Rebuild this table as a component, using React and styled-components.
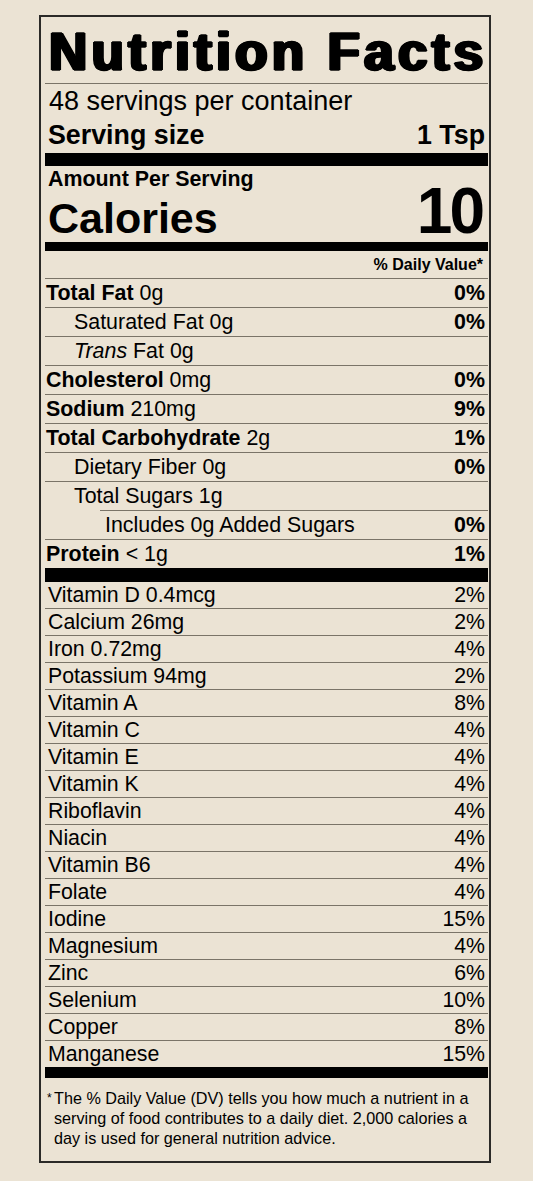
import React from "react";
import styled, { createGlobalStyle } from "styled-components";

const GlobalStyle = createGlobalStyle`
  html, body {
    margin: 0;
    padding: 0;
    background: #ebe3d4;
  }
  body {
    font-family: "Liberation Sans", Arial, Helvetica, sans-serif;
    color: #000;
  }
`;

const LINE = "#7a7468";

const Page = styled.div`
  padding: 15px 0 0 39px;
`;

const Label = styled.section`
  border: 2px solid #2b2a28;
  padding: 0 1px 0 4px;
  box-sizing: content-box;
  width: 443px;
`;

// heavy headline: stroke + sideways shadows fake a black weight
const Title = styled.h1`
  margin: 0;
  height: 66px;
  border-bottom: 1px solid ${LINE};
  font-size: 53px;
  font-weight: 700;
  letter-spacing: 4.3px;
  -webkit-text-stroke: 1.6px #000;
  text-shadow: 1px 0 0 #000, -1px 0 0 #000, 1.8px 0 0 #000, -1.8px 0 0 #000;
  line-height: 70px;
  padding-left: 4px;
  white-space: nowrap;
`;

const Servings = styled.div`
  height: 32px;
  line-height: 34px;
  font-size: 27px;
  padding-left: 4px;
`;

const ServingSize = styled.div`
  display: flex;
  justify-content: space-between;
  align-items: center;
  height: 37px;
  padding: 2px 3px 0 3px;
  box-sizing: border-box;
  font-size: 26.8px;
  font-weight: 700;
`;

const Bar = styled.div`
  height: ${({ $h }) => $h}px;
  background: #000;
`;

const CaloriesBlock = styled.div`
  height: 76px;
  padding: 0 3px 0 3px;
  box-sizing: border-box;
`;

const AmountLabel = styled.div`
  font-size: 21.4px;
  font-weight: 700;
  line-height: 26px;
`;

const CaloriesRow = styled.div`
  display: flex;
  justify-content: space-between;
  align-items: baseline;
  height: 50px;
  margin-top: -6px;
  font-weight: 700;
`;

const CaloriesText = styled.span`
  font-size: 43px;
  line-height: 50px;
`;

const CaloriesValue = styled.span`
  font-size: 64px;
  line-height: 50px;
  letter-spacing: -3px;
  margin-right: 3px;
`;

const DvHeader = styled.div`
  height: 27px;
  line-height: 27px;
  text-align: right;
  font-size: 16px;
  font-weight: 700;
  padding-right: 5px;
  border-bottom: 1px solid ${LINE};
`;

const NutrientRow = styled.div`
  display: flex;
  justify-content: space-between;
  align-items: center;
  height: 28px;
  font-size: 21.4px;
  padding: 0 3px 0 ${({ $pad }) => $pad}px;
  border-top: ${({ $first }) => ($first ? "none" : `1px solid ${LINE}`)};
  margin-left: ${({ $inset }) => $inset}px;
`;

const Bold = styled.b`
  font-weight: 700;
`;

const Italic = styled.i`
  font-style: italic;
`;

const Percent = styled.span`
  font-weight: 700;
`;

const VitaminRow = styled.div`
  display: flex;
  justify-content: space-between;
  align-items: center;
  height: 26px;
  font-size: 21.3px;
  padding: 0 3px 0 3px;
  border-bottom: ${({ $last }) => ($last ? "none" : `1px solid ${LINE}`)};
`;

const Footnote = styled.div`
  display: flex;
  padding: 10px 10px 13px 2px;
  font-size: 16.2px;
  line-height: 20px;
`;

const Star = styled.span`
  font-size: 12px;
  width: 7px;
  flex: none;
  line-height: 20px;
`;

const nutrients = [
  { name: <><Bold>Total Fat</Bold> 0g</>, dv: "0%", pad: 1, first: true },
  { name: <>Saturated Fat 0g</>, dv: "0%", pad: 29 },
  { name: <><Italic>Trans</Italic> Fat 0g</>, dv: "", pad: 29 },
  { name: <><Bold>Cholesterol</Bold> 0mg</>, dv: "0%", pad: 1 },
  { name: <><Bold>Sodium</Bold> 210mg</>, dv: "9%", pad: 1 },
  { name: <><Bold>Total Carbohydrate</Bold> 2g</>, dv: "1%", pad: 1 },
  { name: <>Dietary Fiber 0g</>, dv: "0%", pad: 29 },
  { name: <>Total Sugars 1g</>, dv: "", pad: 29 },
  { name: <>Includes 0g Added Sugars</>, dv: "0%", pad: 5, inset: 55 },
  { name: <><Bold>Protein</Bold> &lt; 1g</>, dv: "1%", pad: 1 },
];

const vitamins = [
  ["Vitamin D 0.4mcg", "2%"],
  ["Calcium 26mg", "2%"],
  ["Iron 0.72mg", "4%"],
  ["Potassium 94mg", "2%"],
  ["Vitamin A", "8%"],
  ["Vitamin C", "4%"],
  ["Vitamin E", "4%"],
  ["Vitamin K", "4%"],
  ["Riboflavin", "4%"],
  ["Niacin", "4%"],
  ["Vitamin B6", "4%"],
  ["Folate", "4%"],
  ["Iodine", "15%"],
  ["Magnesium", "4%"],
  ["Zinc", "6%"],
  ["Selenium", "10%"],
  ["Copper", "8%"],
  ["Manganese", "15%"],
];

export default function App() {
  return (
    <>
      <GlobalStyle />
      <Page>
        <Label>
          <Title>Nutrition Facts</Title>
          <Servings>48 servings per container</Servings>
          <ServingSize>
            <span>Serving size</span>
            <span>1 Tsp</span>
          </ServingSize>
          <Bar $h={13} />
          <CaloriesBlock>
            <AmountLabel>Amount Per Serving</AmountLabel>
            <CaloriesRow>
              <CaloriesText>Calories</CaloriesText>
              <CaloriesValue>10</CaloriesValue>
            </CaloriesRow>
          </CaloriesBlock>
          <Bar $h={9} />
          <DvHeader>% Daily Value*</DvHeader>
          {nutrients.map((n, i) => (
            <NutrientRow key={i} $pad={n.pad} $first={n.first} $inset={n.inset || 0}>
              <span>{n.name}</span>
              <Percent>{n.dv}</Percent>
            </NutrientRow>
          ))}
          <Bar $h={14} />
          {vitamins.map(([name, dv], i) => (
            <VitaminRow key={name} $last={i === vitamins.length - 1}>
              <span>{name}</span>
              <span>{dv}</span>
            </VitaminRow>
          ))}
          <Bar $h={11} />
          <Footnote>
            <Star>*</Star>
            <span>
              The % Daily Value (DV) tells you how much a nutrient in a serving
              of food contributes to a daily diet. 2,000 calories a day is used
              for general nutrition advice.
            </span>
          </Footnote>
        </Label>
      </Page>
    </>
  );
}
